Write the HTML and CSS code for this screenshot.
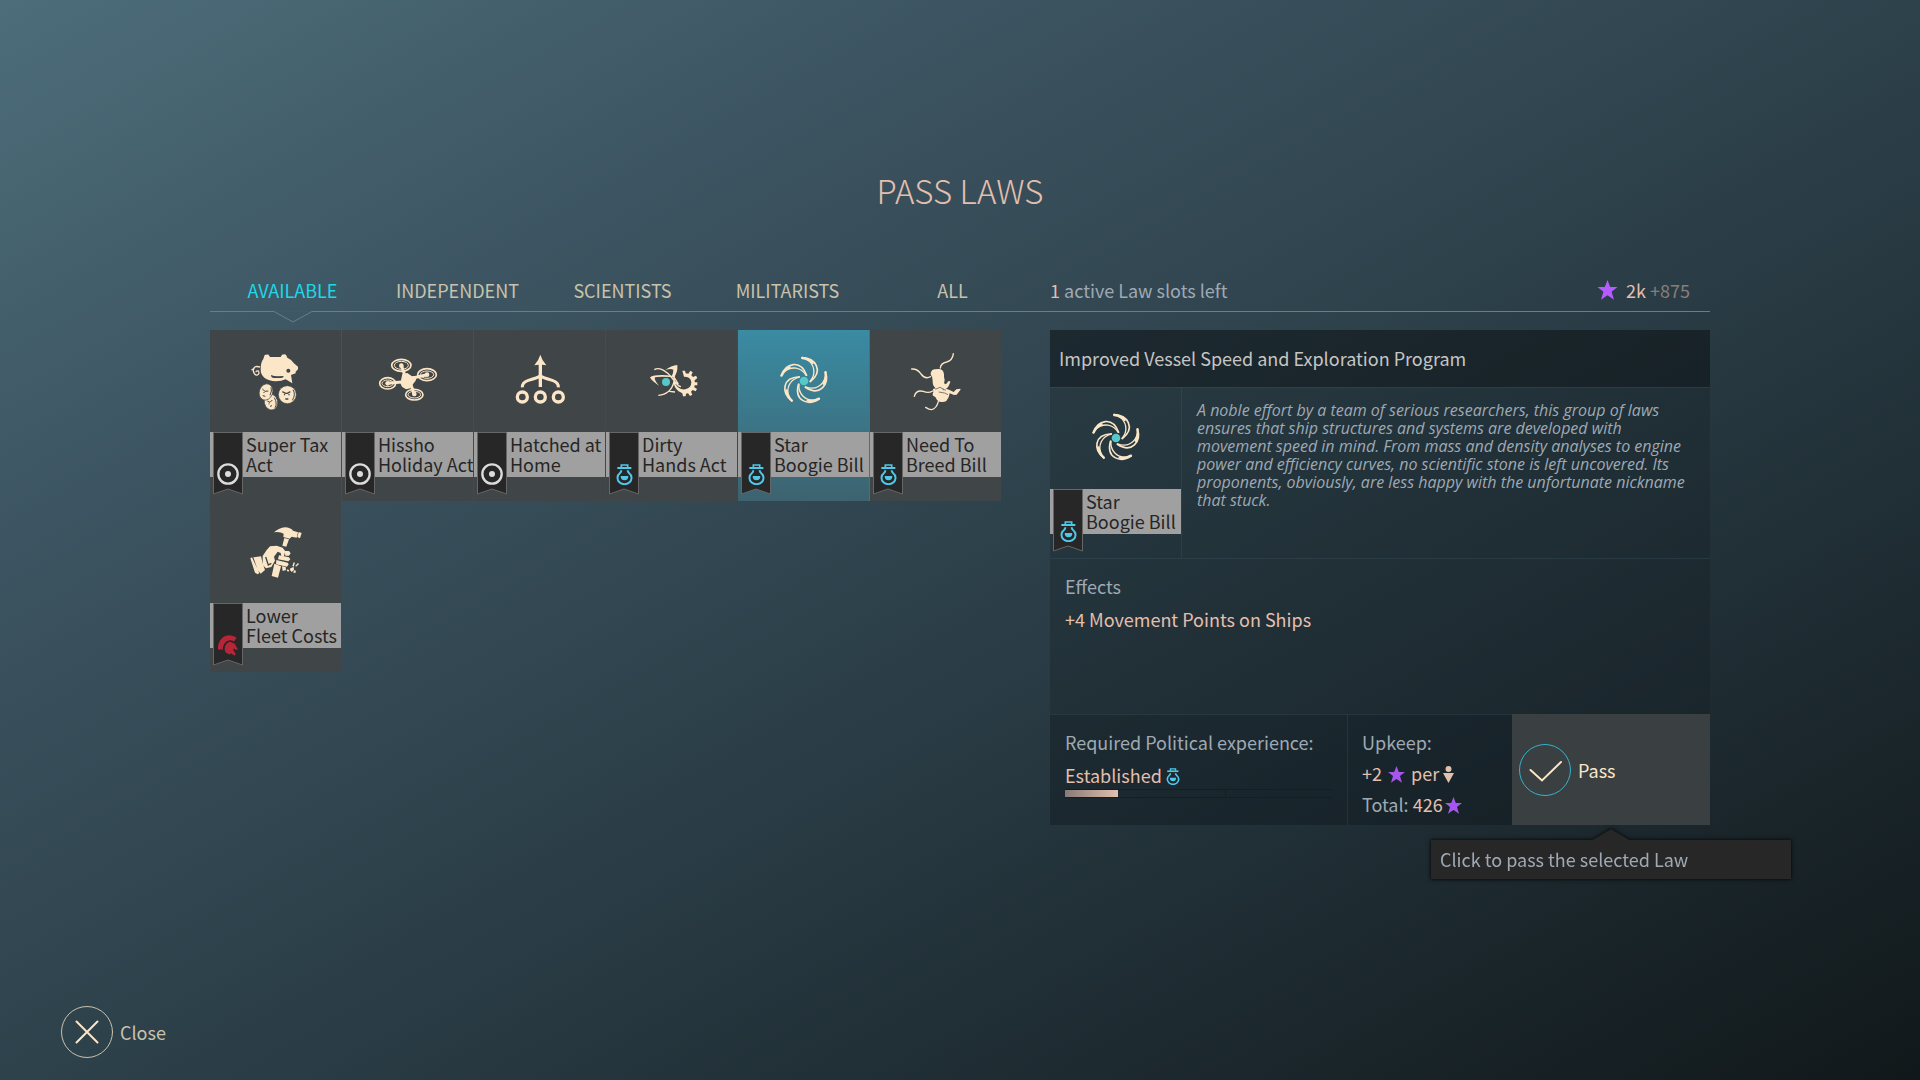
FILE: index.html
```html
<!DOCTYPE html>
<html lang="en">
<head>
    <meta charset="UTF-8">
    <meta name="viewport" content="width=device-width, initial-scale=1.0">
    <title>Pass Laws</title>
    <link rel="stylesheet" href="styles.css">
</head>
<body>
    <svg class="sprite" aria-hidden="true">
        <symbol id="star" viewBox="0 0 20 20">
            <path d="M10 0l2.700 7h7.300l-5.900 4.700 2.400 8.100-6.500-4.600-6.500 4.600 2.400-8.100L0 7h7.300z"/>
        </symbol>
        <symbol id="flask" viewBox="0 0 51 63">
            <path d="M4 12h42" stroke="currentColor" stroke-width="6"/>
            <path d="M16 10V3h19v7" fill="none" stroke="currentColor" stroke-width="5"/>
            <path d="M16 19q0 5-4 8a21 19 0 1 0 27 0q-4-3-4-8" fill="none" stroke="currentColor" stroke-width="6"/>
            <path d="M14 36h23q0 13-11.500 13T14 36z" fill="currentColor"/>
        </symbol>
        <symbol id="target" viewBox="0 0 66 66">
            <circle cx="33" cy="33" r="29" fill="none" stroke="currentColor" stroke-width="7"/>
            <circle cx="33" cy="33" r="9" fill="currentColor"/>
        </symbol>
        <symbol id="helmet" viewBox="0 0 60 62">
            <path d="M0 43C-2 18 15 0 34 0q13 0 22 8l-8 11q-8-5-16-3Q16 20 14 43z" fill="currentColor"/>
            <path d="M20 44q0-20 16-24l14 6 10 17-8 1-3-4-4 4 8 12-3 6-11-8-4 4-12-6z" fill="currentColor"/>
        </symbol>
        <symbol id="galaxy" viewBox="0 0 393 306">
            <g fill="none" stroke="currentColor" stroke-linecap="round">
                <g id="arm">
                    <path d="M192 83C232 84 258 122 217 155" stroke-width="5"/>
                    <path d="M204 87C232 103 234 133 216 154" stroke-width="4"/>
                    <path d="M193 84Q212 86 224 99" stroke-width="7"/>
                </g>
                <use href="#arm" transform="rotate(72 198 153)"/>
                <use href="#arm" transform="rotate(144 198 153)"/>
                <use href="#arm" transform="rotate(216 198 153)"/>
                <use href="#arm" transform="rotate(288 198 153)"/>
            </g>
            <circle cx="198" cy="153" r="13" fill="#56c8c8"/>
        </symbol>
    </svg>

    <main class="laws">
        <h1>PASS LAWS</h1>

        <header class="bar">
            <nav class="tabs">
                <button class="tab active" type="button">AVAILABLE
                    <svg class="notch" viewBox="0 0 40 12"><path d="M0 .5h1L20 11 39 .5h1" fill="none" stroke="currentColor"/></svg>
                </button>
                <button class="tab" type="button">INDEPENDENT</button>
                <button class="tab" type="button">SCIENTISTS</button>
                <button class="tab" type="button">MILITARISTS</button>
                <button class="tab" type="button">ALL</button>
            </nav>
            <div class="status">
                <p class="slots"><b>1</b> active Law slots left</p>
                <p class="influence"><svg class="star-big"><use href="#star"/></svg><b>2k</b> <span>+875</span></p>
            </div>
        </header>

        <div class="content">
            <section class="cards">
                <button class="card" type="button">
                    <svg class="art" viewBox="0 0 393 306">
                        <path fill="currentColor" d="M160 87l4-12q6-3 12-1l4 7h32l4-7q7-3 12 0l4 9q12 5 19 16l13 11v8l-7 7v5l-14 5 4 25-20-12q-12 6-29 6-22-1-34-10-13-11-12-27 0-20 8-30z"/>
                        <path d="M150 111q-21-6-20 12 3 14 12 12 8-4 3-12-7-2-7 4M134 115l-10 5" fill="none" stroke="currentColor" stroke-width="4"/>
                        <path d="M183 135q0 9 9 9h21q8 0 8-6l-17 1q-13 0-21-4z" fill="#404547"/>
                        <circle cx="235" cy="122" r="6" fill="#404547"/>
                        <g fill="currentColor" stroke="#404547" stroke-width="2">
                            <ellipse cx="183" cy="216" rx="20" ry="24" transform="rotate(-15 183 216)"/>
                            <ellipse cx="168" cy="186" rx="20" ry="25" transform="rotate(20 168 186)"/>
                            <circle cx="232" cy="194" r="27"/>
                        </g>
                        <g fill="none" stroke="#404547" stroke-width="3">
                            <path d="M157 177l8 7 10-1M163 186l-2 3M158 197l8 2M183 172q4 10-3 24"/>
                            <path d="M172 213l8 4 7-7M177 220v3M180 229l6-2M193 203q10 17 2 30"/>
                            <path d="M249 179q9 15-2 32"/>
                            <path d="M217 185l10 5h5l9-5M222 193l3 2M235 194h4M226 207h9" stroke-width="4"/>
                        </g>
                    </svg>
                    <span class="label">Super Tax<br>Act</span>
                    <span class="ribbon"><svg class="edge" viewBox="0 0 30 63"><path d="M.5.500h29v61.500L15 57 .5 62z"/></svg><svg class="party neutral"><use href="#target"/></svg></span>
                </button>
                <button class="card" type="button">
                    <svg class="art" viewBox="0 0 393 306">
                        <g fill="none" stroke="currentColor">
                            <g stroke-width="5">
                                <ellipse cx="178" cy="106" rx="29" ry="18"/>
                                <ellipse cx="255" cy="134" rx="28" ry="18"/>
                                <ellipse cx="137" cy="160" rx="24" ry="17"/>
                                <ellipse cx="217" cy="194" rx="26" ry="16"/>
                            </g>
                            <g stroke-width="3">
                                <ellipse cx="178" cy="106" rx="21" ry="12"/>
                                <ellipse cx="255" cy="134" rx="20" ry="11"/>
                                <ellipse cx="137" cy="160" rx="17" ry="10"/>
                                <ellipse cx="217" cy="194" rx="19" ry="10"/>
                            </g>
                            <path d="M178 106l12 35M255 134l-46 11M137 160l42-4M217 194l-10-30" stroke-width="9" stroke-linecap="round"/>
                        </g>
                        <path d="M181 132l15-3 14 10 14-1-3 14-10 13-6 10-13 3-12-8-5-10z" fill="currentColor"/>
                        <g fill="currentColor">
                            <circle cx="178" cy="107" r="7"/>
                            <circle cx="255" cy="134" r="7"/>
                            <circle cx="137" cy="160" r="7"/>
                            <circle cx="217" cy="192" r="7"/>
                        </g>
                    </svg>
                    <span class="label">Hissho<br>Holiday Act</span>
                    <span class="ribbon"><svg class="edge" viewBox="0 0 30 63"><path d="M.5.500h29v61.500L15 57 .5 62z"/></svg><svg class="party neutral"><use href="#target"/></svg></span>
                </button>
                <button class="card" type="button">
                    <svg class="art" viewBox="0 0 393 306">
                        <path d="M199 74q5 17 18 32l-13-2v67h-10v-67l-13 2q13-15 18-32z" fill="currentColor"/>
                        <path d="M145 172q-1-15 18-21 30-8 36-14 6 6 36 14 19 6 18 21" fill="none" stroke="currentColor" stroke-width="9"/>
                        <g fill="none" stroke="currentColor" stroke-width="10">
                            <circle cx="145" cy="201" r="15"/>
                            <circle cx="199" cy="201" r="15"/>
                            <circle cx="253" cy="201" r="15"/>
                        </g>
                    </svg>
                    <span class="label">Hatched at<br>Home</span>
                    <span class="ribbon"><svg class="edge" viewBox="0 0 30 63"><path d="M.5.500h29v61.500L15 57 .5 62z"/></svg><svg class="party neutral"><use href="#target"/></svg></span>
                </button>
                <button class="card" type="button">
                    <svg class="art" viewBox="0 0 393 306">
                        <path d="M132 142q14-10 66-5l-1 4q-46-3-51 2 0 9 13 24-22-14-27-25zM214 105q2 22-11 38l-7-2q7-12 6-22-8-4-24 1 18-14 36-15z" fill="currentColor"/>
                        <path d="M145 119q9-6 22-1 16 6 36 32 14 20 22 20M210 118q-10 27-3 45M204 155q-9 38-47 41M190 184l17 2M203 140l14 22" fill="none" stroke="currentColor" stroke-width="4"/>
                        <path d="M202 150q7 17 16 23 8 7 20 5 18-4 18-22-2-16-22-16l-5-18h8l2 8 8 1 6-9 7 5-4 9 5 5 9-4 4 7-8 7v6h8v9h-8l-1 6 8 5-4 7-9-4-5 5 4 9-7 4-6-8-6 1-1 8h-8l-2-9q-26-9-27-40z" fill="currentColor"/>
                        <circle cx="180" cy="156" r="12" fill="#56c8c8"/>
                    </svg>
                    <span class="label">Dirty<br>Hands Act</span>
                    <span class="ribbon"><svg class="edge" viewBox="0 0 30 63"><path d="M.5.500h29v61.500L15 57 .5 62z"/></svg><svg class="party science"><use href="#flask"/></svg></span>
                </button>
                <button class="card selected" type="button">
                    <svg class="art"><use href="#galaxy"/></svg>
                    <span class="label">Star<br>Boogie Bill</span>
                    <span class="ribbon"><svg class="edge" viewBox="0 0 30 63"><path d="M.5.500h29v61.500L15 57 .5 62z"/></svg><svg class="party science"><use href="#flask"/></svg></span>
                </button>
                <button class="card" type="button">
                    <svg class="art" viewBox="0 0 393 306">
                        <g fill="none" stroke="currentColor" stroke-width="4" stroke-linecap="round">
                            <path d="M250 71q-2 20-20 25-18 4-19 18"/>
                            <path d="M125 117q18-1 28 15 12 17 29 8"/>
                            <path d="M133 199q5-20 27-15 15 7 28-1"/>
                            <path d="M167 232q10 7 18 7 14-2 21-27"/>
                        </g>
                        <path d="M183 126q3-9 12-8 16-3 22 3 6 6 5 20l2 9-2 10 6 3 7-9q4-3 6 2l-5 12q-2 5-8 8l9 3 14 7 8-8 12-2q2 3-2 6l-9 12-8 1-13-5-3 12-7 11q-8 5-20 2-10-4-13-14l-7-4q-3-5 1-10l-1-10 8-2q-10-8-9-22l-2-14q-6-4-3-13z" fill="currentColor"/>
                        <path d="M196 178l14-6 12 6M206 186l18 3 10 5M228 180l-10-1" fill="none" stroke="#404547" stroke-width="2"/>
                    </svg>
                    <span class="label">Need To<br>Breed Bill</span>
                    <span class="ribbon"><svg class="edge" viewBox="0 0 30 63"><path d="M.5.500h29v61.500L15 57 .5 62z"/></svg><svg class="party science"><use href="#flask"/></svg></span>
                </button>
                <button class="card" type="button">
                    <svg class="art" viewBox="0 0 393 306">
                        <g fill="currentColor">
                            <path d="M192 94q18-15 36-15 15 2 21 10l15 5-4 16-15-3-6 6-19-5 1-10q-12-7-29-4zM266 93l9 3-5 16-8-4z"/>
                            <path d="M223 111l14 4-8 22-12-3zM193 188l20 8-9 34-19-5z"/>
                            <path d="M158 165l12-18 10-11 20-2 18 6 8 11-4 14-7 4-3-13-9-4-11 15 3 12-11 19-16 4-10-10z"/>
                            <path d="M121 172l5-3 22 47-5 4-8-5zM130 169l23-3 5 21 7 20-13 11-9-12z"/>
                            <path d="M224 150h13l5 7-5 7h-11zM207 163l30 6 4 6-6 6-31-6zM199 177l34 8 3 5-5 7-33-7zM216 196l11 2 1 9-10 3z"/>
                            <path d="M247 195l4-11 4 1-4 12zM256 194l8-8 3 3-9 8zM241 202l10-4 1 9-7 6-5-6zM252 208l6 1-2 7-6-1zM232 205l6 3-3 4-5-3z"/>
                        </g>
                        <path d="M167 168l8 24 9-5" fill="none" stroke="#404547" stroke-width="4"/>
                    </svg>
                    <span class="label">Lower<br>Fleet Costs</span>
                    <span class="ribbon"><svg class="edge" viewBox="0 0 30 63"><path d="M.5.500h29v61.500L15 57 .5 62z"/></svg><svg class="party military"><use href="#helmet"/></svg></span>
                </button>
            </section>

            <section class="detail">
                <h2>Improved Vessel Speed and Exploration Program</h2>
                <div class="summary">
                    <div class="card plain">
                        <svg class="art"><use href="#galaxy"/></svg>
                        <span class="label">Star<br>Boogie Bill</span>
                        <span class="ribbon"><svg class="edge" viewBox="0 0 30 63"><path d="M.5.500h29v61.500L15 57 .5 62z"/></svg><svg class="party science"><use href="#flask"/></svg></span>
                    </div>
                    <p class="lore">A noble effort by a team of serious researchers, this group of laws<br>
                        ensures that ship structures and systems are developed with<br>
                        movement speed in mind. From mass and density analyses to engine<br>
                        power and efficiency curves, no scientific stone is left uncovered. Its<br>
                        proponents, obviously, are less happy with the unfortunate nickname<br>
                        that stuck.</p>
                </div>
                <div class="effects">
                    <h3>Effects</h3>
                    <p>+4 Movement Points on Ships</p>
                </div>
                <footer class="requirements">
                    <div class="experience">
                        <h3>Required Political experience:</h3>
                        <p>Established <svg class="flask-small"><use href="#flask"/></svg></p>
                        <div class="progress"><span class="fill"></span><span></span><span></span></div>
                    </div>
                    <div class="upkeep">
                        <h3>Upkeep:</h3>
                        <p>+2 <svg class="star-small"><use href="#star"/></svg> per <svg class="person" viewBox="0 0 11 17"><circle cx="5.500" cy="3" r="3"/><path d="M0 7h11L5.500 17z"/></svg></p>
                        <p><span class="muted">Total:</span> 426<svg class="star-small"><use href="#star"/></svg></p>
                    </div>
                    <div class="action">
                        <button class="pass" type="button" aria-describedby="pass-tip">
                            <svg class="round" viewBox="0 0 52 52"><circle cx="26" cy="26" r="25.500"/><path d="M11.500 26L23 36.500 42 18"/></svg>
                            Pass
                        </button>
                        <div class="tooltip" id="pass-tip" role="tooltip">
                            <svg class="tip-arrow" viewBox="0 0 40 13"><path d="M0 13L20 1l20 12z"/></svg>
                            Click to pass the selected Law
                        </div>
                    </div>
                </footer>
            </section>
        </div>
    </main>

    <button class="close" type="button">
        <svg class="round" viewBox="0 0 52 52"><circle cx="26" cy="26" r="25.500"/><path d="M15.500 15.500l21 21M36.500 15.500l-21 21"/></svg>
        Close
    </button>
</body>
</html>
```

FILE: styles.css
```css
* {
    box-sizing: border-box;
    margin: 0;
    padding: 0;
}

body {
    min-height: 100vh;
    display: flex;
    flex-direction: column;
    justify-content: space-between;
    align-items: flex-start;
    padding: 166px 61px 22px;
    background: linear-gradient(to bottom right, #4d6d7a 0%, #3d5562 25%, #2e424c 50%, #1d2a30 78%, #11181a 100%) no-repeat;
    color: #9fa9b4;
    font-family: "Noto Sans CJK SC", "Noto Sans", sans-serif;
    font-size: 18px;
    line-height: 24px;
}

button {
    border: 0;
    background: none;
    color: inherit;
    font: inherit;
    cursor: pointer;
}

b, h2, h3 {
    font-size: 18px;
    font-weight: 400;
}

svg {
    fill: currentColor;
}

.sprite {
    position: absolute;
    width: 0;
    height: 0;
}

.laws {
    width: 100%;
    max-width: 1500px;
    margin: 0 auto;
}

h1 {
    margin-bottom: 68px;
    color: #e3bfae;
    font-size: 33px;
    font-weight: 300;
    line-height: 48px;
    text-align: center;
}

/* tabs and status line */
.bar {
    display: grid;
    grid-template-columns: 56fr 44fr;
    height: 30px;
    border-bottom: 1px solid #6c7e84;
}

.tabs {
    display: grid;
    grid-template-columns: repeat(5, 1fr);
    margin-right: 15px;
}

.tab {
    position: relative;
    height: 40px;
    padding-bottom: 24px;
    color: #c9c2ac;
    line-height: 16px;
}

.tab.active {
    color: #1cd9e8;
}

.notch {
    position: absolute;
    top: 29px;
    left: 50%;
    width: 40px;
    height: 12px;
    margin-left: -20px;
    background: linear-gradient(#405a67, #405a67) no-repeat 0 0 / 40px 1px;
    color: #6c7e84;
}

.status {
    display: flex;
    justify-content: space-between;
    align-items: flex-start;
    padding-right: 20px;
    line-height: 16px;
}

.slots b, .influence b {
    color: #e3bfae;
}

.influence {
    display: flex;
    gap: 4px;
    height: 16px;
    align-items: center;
}

.influence span {
    color: #8a7d79;
}

.star-big {
    width: 21px;
    height: 20px;
    margin-right: 4px;
    color: #b45cff;
}

/* law cards */
.content {
    display: grid;
    grid-template-columns: 56fr 44fr;
    align-items: start;
    margin-top: 18px;
}

.cards {
    display: grid;
    grid-template-columns: repeat(6, 131px);
    column-gap: 1px;
}

.card {
    position: relative;
    display: flex;
    flex-direction: column;
    align-items: stretch;
    justify-content: flex-start;
    height: 171px;
    background: #404547;
    color: #fbe6c8;
    text-align: left;
}

.card.selected {
    background: linear-gradient(#3a8ba3, #3d636f);
    box-shadow: 1px 0 0 #3b7688;
}

.card.plain {
    flex: none;
    width: 131px;
    background: none;
}

.art {
    width: 131px;
    height: 102px;
}

.label {
    height: 45px;
    padding: 2px 0 0 36px;
    background: #a0a0a0;
    color: #262626;
    line-height: 20px;
    white-space: nowrap;
}

.ribbon {
    position: absolute;
    top: 102px;
    left: 3px;
    display: flex;
    justify-content: center;
    align-items: flex-end;
    width: 30px;
    height: 63px;
    padding-bottom: 10px;
}

.edge {
    position: absolute;
    top: 0;
    left: 0;
    width: 30px;
    height: 63px;
    fill: #272727;
    stroke: #666;
}

.party {
    position: relative;
}

.neutral {
    width: 22px;
    height: 22px;
    color: #dcdcdc;
}

.science {
    width: 17px;
    height: 21px;
    color: #4fc8ea;
}

.military {
    width: 20px;
    height: 21px;
    color: #b92538;
}

/* selected law */
.detail {
    background: rgba(15, 22, 26, 0.25);
}

.detail h2 {
    padding: 16px 9px 17px;
    background: rgba(10, 15, 18, 0.4);
    color: #c6c5c3;
}

.summary, .effects, .requirements {
    box-shadow: inset 0 1px 0 rgba(80, 115, 130, 0.2);
}

.summary {
    display: flex;
}

.lore {
    padding: 14px 0 0 15px;
    border-left: 1px solid rgba(80, 115, 130, 0.2);
    font-family: "Open Sans", "Noto Sans", sans-serif;
    font-size: 16px;
    font-style: italic;
    font-weight: 500;
    line-height: 18px;
    white-space: nowrap;
}

.effects {
    min-height: 156px;
    padding: 16px 15px;
    color: #e3bfae;
}

.detail h3 {
    color: #9fa9b4;
}

.effects h3 {
    margin-bottom: 9px;
}

.requirements {
    display: grid;
    grid-template-columns: 297fr 165fr 198fr;
    min-height: 111px;
    background: rgba(10, 15, 18, 0.15);
    color: #e3bfae;
}

.experience, .upkeep {
    padding: 16px 15px 0;
}

.experience h3 {
    margin-bottom: 9px;
}

.flask-small {
    width: 14px;
    height: 17px;
    color: #4fc8ea;
    vertical-align: -2px;
}

.progress {
    display: grid;
    grid-template-columns: 1fr 2fr 2fr;
    height: 9px;
    margin-top: 2px;
    border: solid #161e22;
    border-width: 1px 0;
}

.progress span + span + span {
    border-left: 1px solid #161e22;
}

.fill {
    background: linear-gradient(90deg, #877a75, #e3bfae);
}

.upkeep {
    padding-left: 14px;
    border-left: 1px solid rgba(80, 115, 130, 0.2);
}

.upkeep p {
    margin-top: 7px;
}

.muted {
    color: #9fa9b4;
}

.star-small {
    width: 17px;
    height: 17px;
    margin: 0 2px;
    color: #a655ee;
    vertical-align: -2px;
}

.person {
    width: 11px;
    height: 17px;
    vertical-align: -2px;
}

.action {
    position: relative;
}

.pass, .close {
    display: flex;
    align-items: center;
    gap: 7px;
}

.pass {
    width: 100%;
    height: 100%;
    padding-left: 7px;
    background: #3a3f41;
    color: #fbe6c8;
}

.close {
    color: #c9c2ac;
}

.round {
    width: 52px;
    height: 52px;
    fill: none;
    stroke: #fbe6c8;
    stroke-width: 2;
    stroke-linecap: round;
}

.round circle {
    stroke: #c9c2ac;
    stroke-width: 1;
}

.pass .round circle {
    stroke: #33b4cc;
}

.tooltip {
    position: absolute;
    top: calc(100% + 15px);
    left: 50%;
    width: 360px;
    margin-left: -180px;
    padding: 7px 9px 8px;
    background: #272727;
    color: #9fa9b4;
    filter: drop-shadow(0 0 1px #0b0f10) drop-shadow(0 0 2px #0b0f10);
}

.tip-arrow {
    position: absolute;
    top: -12px;
    left: 50%;
    width: 40px;
    height: 13px;
    margin-left: -20px;
    fill: #272727;
}
```
